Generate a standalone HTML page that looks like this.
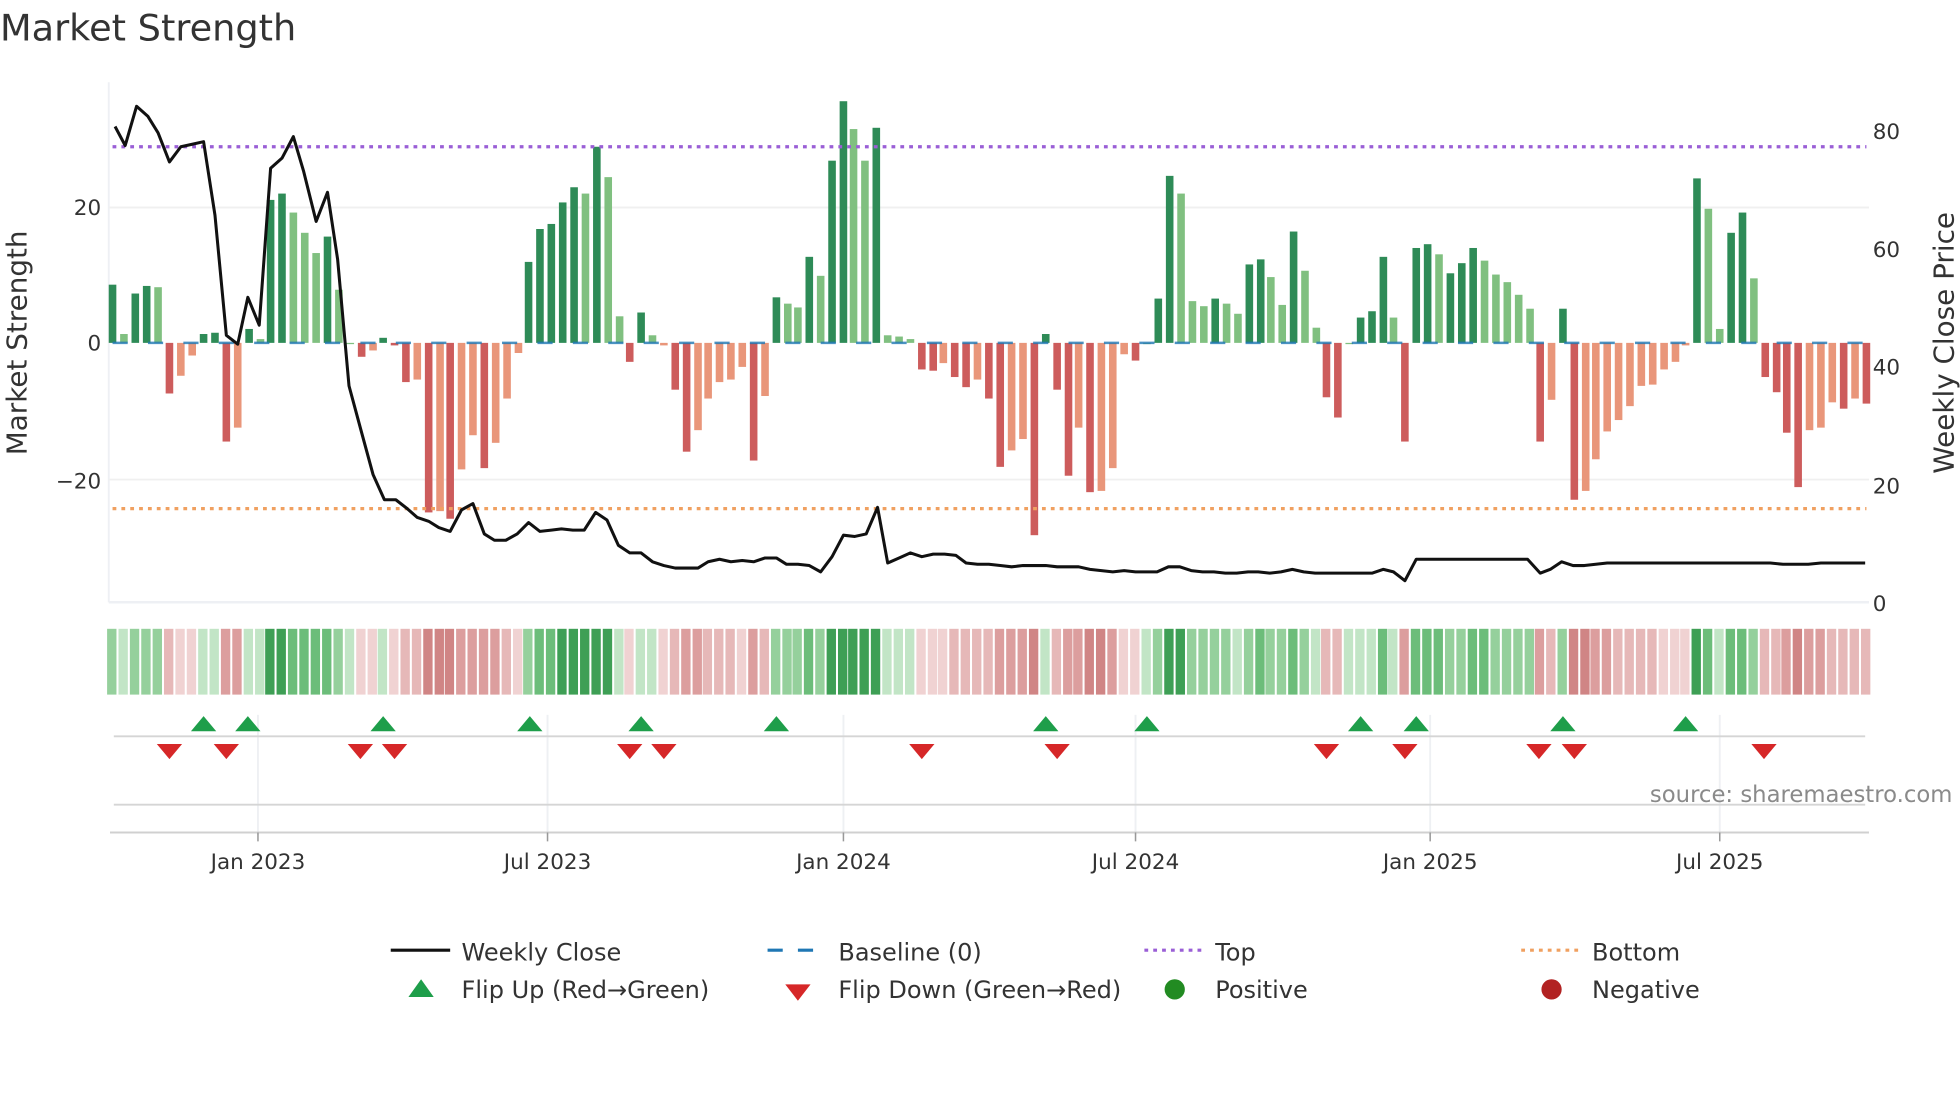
<!DOCTYPE html>
<html><head><meta charset="utf-8"><style>
html,body{margin:0;padding:0;background:#fff;}
svg{display:block;font-family:"DejaVu Sans","Liberation Sans",sans-serif;}
</style></head><body>
<svg id="s" width="1960" height="1102" viewBox="0 0 1550 871" preserveAspectRatio="none" xmlns="http://www.w3.org/2000/svg">
<text x="0" y="32" font-size="29" fill="#333">Market Strength</text>
<line x1="86" y1="65" x2="86" y2="476" stroke="#eef0f4" stroke-width="1.5"/>
<line x1="86" y1="476" x2="1478" y2="476" stroke="#eef0f4" stroke-width="2"/>
<line x1="86" y1="164" x2="1478" y2="164" stroke="#f0f0f0" stroke-width="1.5"/>
<line x1="86" y1="379" x2="1478" y2="379" stroke="#f0f0f0" stroke-width="1.5"/>
<g id="bars"></g>
<line x1="89" y1="271" x2="1476" y2="271" stroke="#1f77b4" stroke-width="2" stroke-dasharray="12,16" opacity="0.8"/>
<line x1="89" y1="116" x2="1476" y2="116" stroke="#9a5fd6" stroke-width="2.5" stroke-dasharray="3,4"/>
<line x1="89" y1="402" x2="1476" y2="402" stroke="#f0a060" stroke-width="2.5" stroke-dasharray="3,4"/>
<polyline id="price" fill="none" stroke="#111" stroke-width="2.4" stroke-linejoin="round"/>
<g font-size="17" fill="#333">
<text x="80" y="170" text-anchor="end">20</text>
<text x="80" y="277" text-anchor="end">0</text>
<text x="80" y="386" text-anchor="end">−20</text>
<text x="1481" y="110">80</text>
<text x="1481" y="203">60</text>
<text x="1481" y="296">40</text>
<text x="1481" y="390">20</text>
<text x="1481" y="483">0</text>
</g>
<text transform="translate(21,271) rotate(-90)" font-size="22" fill="#333" text-anchor="middle">Market Strength</text>
<text transform="translate(1545,271) rotate(-90)" font-size="22" fill="#333" text-anchor="middle">Weekly Close Price</text>
<g id="heat"></g>
<g stroke="#eef0f3" stroke-width="1.5">
<line x1="204" y1="565" x2="204" y2="660"/><line x1="433" y1="565" x2="433" y2="660"/><line x1="667" y1="565" x2="667" y2="660"/><line x1="898" y1="565" x2="898" y2="660"/><line x1="1131" y1="565" x2="1131" y2="660"/><line x1="1360" y1="565" x2="1360" y2="660"/>
</g>
<line x1="90" y1="582" x2="1475" y2="582" stroke="#d5d5d5" stroke-width="1.5"/>
<line x1="90" y1="636" x2="1475" y2="636" stroke="#d5d5d5" stroke-width="1.5"/>
<line x1="87" y1="658" x2="1478" y2="658" stroke="#d0d0d0" stroke-width="1.5"/>
<g stroke="#999" stroke-width="1.2">
<line x1="204" y1="658" x2="204" y2="665"/><line x1="433" y1="658" x2="433" y2="665"/><line x1="667" y1="658" x2="667" y2="665"/><line x1="898" y1="658" x2="898" y2="665"/><line x1="1131" y1="658" x2="1131" y2="665"/><line x1="1360" y1="658" x2="1360" y2="665"/>
</g>
<g id="marks"></g>
<text x="1544" y="634" font-size="18" fill="#8a8a8a" text-anchor="end">source: sharemaestro.com</text>
<g font-size="17" fill="#333" text-anchor="middle">
<text x="204" y="687">Jan 2023</text><text x="433" y="687">Jul 2023</text><text x="667" y="687">Jan 2024</text><text x="898" y="687">Jul 2024</text><text x="1131" y="687">Jan 2025</text><text x="1360" y="687">Jul 2025</text>
</g>
<g font-size="19" fill="#333">
<line x1="309" y1="751" x2="356" y2="751" stroke="#111" stroke-width="2.5"/>
<text x="365" y="759">Weekly Close</text>
<line x1="607" y1="751" x2="654" y2="751" stroke="#1f77b4" stroke-width="2.5" stroke-dasharray="12,12"/>
<text x="663" y="759">Baseline (0)</text>
<line x1="905" y1="751" x2="952" y2="751" stroke="#9a5fd6" stroke-width="2.5" stroke-dasharray="3,4"/>
<text x="961" y="759">Top</text>
<line x1="1203" y1="751" x2="1250" y2="751" stroke="#f0a060" stroke-width="2.5" stroke-dasharray="3,4"/>
<text x="1259" y="759">Bottom</text>
<polygon points="323,788 333,774 343,788" fill="#1e9e4a"/>
<text x="365" y="789">Flip Up (Red→Green)</text>
<polygon points="621,778 641,778 631,791" fill="#d62728"/>
<text x="663" y="789">Flip Down (Green→Red)</text>
<circle cx="929" cy="782" r="8" fill="#228b22"/>
<text x="961" y="789">Positive</text>
<circle cx="1227" cy="782" r="8" fill="#b22222"/>
<text x="1259" y="789">Negative</text>
</g>
</svg>
<script>
var B=[[89,'D',225],[98,'L',264],[107,'D',232],[116,'D',226],[125,'L',227],[134,'R',311],[143,'O',297],[152,'O',281],[161,'D',264],[170,'D',263],[179,'R',349],[188,'O',338],[197,'D',260],[206,'L',268],[214,'D',158],[223,'D',153],[232,'L',168],[241,'L',184],[250,'L',200],[259,'D',187],[268,'L',229],[277,'L',271],[286,'R',282],[295,'O',277],[303,'D',267],[312,'R',273],[321,'R',302],[330,'O',300],[339,'R',405],[348,'O',404],[356,'R',410],[365,'O',371],[374,'O',344],[383,'R',370],[392,'O',350],[401,'O',315],[410,'O',279],[418,'D',207],[427,'D',181],[436,'D',177],[445,'D',160],[454,'D',148],[463,'L',153],[472,'D',116],[481,'L',140],[490,'L',250],[498,'R',286],[507,'D',247],[516,'L',265],[525,'O',273],[534,'R',308],[543,'R',357],[552,'O',340],[560,'O',315],[569,'O',302],[578,'O',300],[587,'O',290],[596,'R',364],[605,'O',313],[614,'D',235],[623,'L',240],[631,'L',243],[640,'D',203],[649,'L',218],[658,'D',127],[667,'D',80],[675,'L',102],[684,'L',127],[693,'D',101],[702,'L',265],[711,'L',266],[720,'L',268],[729,'R',292],[738,'R',293],[746,'O',287],[755,'R',298],[764,'R',306],[773,'O',300],[782,'R',315],[791,'R',369],[800,'O',356],[809,'O',347],[818,'R',423],[827,'D',264],[836,'R',308],[845,'R',376],[853,'O',338],[862,'R',389],[871,'O',388],[880,'O',370],[889,'O',280],[898,'R',285],[907,'L',271],[916,'D',236],[925,'D',139],[934,'L',153],[943,'L',238],[952,'L',242],[961,'D',236],[970,'L',240],[979,'L',248],[988,'D',209],[997,'D',205],[1005,'L',219],[1014,'L',241],[1023,'D',183],[1032,'L',214],[1041,'L',259],[1049,'R',314],[1058,'R',330],[1067,'L',271],[1076,'D',251],[1085,'D',246],[1094,'D',203],[1102,'L',251],[1111,'R',349],[1120,'D',196],[1129,'D',193],[1138,'L',201],[1147,'D',216],[1156,'D',208],[1165,'D',196],[1174,'L',206],[1183,'L',217],[1192,'L',223],[1201,'L',233],[1210,'L',244],[1218,'R',349],[1227,'O',316],[1236,'D',244],[1245,'R',395],[1254,'O',388],[1262,'O',363],[1271,'O',341],[1280,'O',332],[1289,'O',321],[1298,'O',305],[1307,'O',304],[1316,'O',292],[1325,'O',286],[1333,'O',273],[1342,'D',141],[1351,'L',165],[1360,'L',260],[1369,'D',184],[1378,'D',168],[1387,'L',220],[1396,'R',298],[1405,'R',310],[1413,'R',342],[1422,'R',385],[1431,'O',340],[1440,'O',338],[1449,'O',318],[1458,'R',323],[1467,'O',315],[1476,'R',319]];
var C={D:'#2e8b57',L:'#80c080',R:'#cd5c5c',O:'#e9967a'};
var h='',hm='';
B.forEach(function(b){var x=b[0],y=b[2];var t=Math.min(y,271),hh=Math.abs(y-271);
h+='<rect x="'+(x-3)+'" y="'+t+'" width="6" height="'+Math.max(hh,1)+'" fill="'+C[b[1]]+'"/>';
var v=(271-y)/5.35,col;
if(v>=0){col=v>20?'#3e9f55':v>12?'#6cbd7a':v>5?'#95d09c':'#c2e5c6';}
else{var a=-v;col=a>20?'#d08585':a>12?'#dc9e9e':a>5?'#e6b8b8':'#f0d2d2';}
hm+='<rect x="'+(x-4.3)+'" y="497" width="7.4" height="52" fill="'+col+'"/>';});
document.getElementById('bars').innerHTML=h;document.getElementById('heat').innerHTML=hm;
var P=[[91,100],[99,115],[108,84],[117,92],[125,105],[134,128],[143,116],[152,114],[161,112],[170,170],[179,265],[188,272],[196,235],[205,257],[214,133],[223,125],[232,108],[240,135],[250,175],[259,152],[267,205],[276,305],[286,342],[295,375],[304,395],[313,395],[322,402],[330,409],[339,412],[347,417],[356,420],[365,403],[374,398],[383,422],[391,427],[400,427],[409,422],[418,413],[427,420],[436,419],[444,418],[453,419],[462,419],[471,405],[480,411],[489,431],[498,437],[507,437],[516,444],[525,447],[534,449],[543,449],[552,449],[560,444],[569,442],[578,444],[587,443],[596,444],[605,441],[614,441],[622,446],[631,446],[640,447],[649,452],[658,440],[667,423],[676,424],[685,422],[694,401],[702,445],[711,441],[720,437],[729,440],[738,438],[747,438],[756,439],[764,445],[773,446],[782,446],[791,447],[800,448],[809,447],[818,447],[827,447],[836,448],[845,448],[853,448],[862,450],[871,451],[880,452],[889,451],[898,452],[906,452],[915,452],[924,448],[933,448],[942,451],[951,452],[960,452],[969,453],[978,453],[987,452],[995,452],[1004,453],[1013,452],[1022,450],[1031,452],[1040,453],[1085,453],[1094,450],[1102,452],[1111,459],[1120,442],[1208,442],[1218,453],[1226,450],[1235,444],[1244,447],[1253,447],[1262,446],[1271,445],[1400,445],[1410,446],[1430,446],[1440,445],[1475,445]];
document.getElementById('price').setAttribute('points',P.map(function(p){return p.join(',')}).join(' '));
var U=[161,196,303,419,507,614,827,907,1076,1120,1236,1333],D=[134,179,285,312,498,525,729,836,1049,1111,1217,1245,1395],m='';
U.forEach(function(x){m+='<polygon points="'+(x-10)+',578 '+x+',566 '+(x+10)+',578" fill="#1e9e4a"/>';});
D.forEach(function(x){m+='<polygon points="'+(x-10)+',588 '+(x+10)+',588 '+x+',600" fill="#d62728"/>';});
document.getElementById('marks').innerHTML=m;
</script>
</body></html>
